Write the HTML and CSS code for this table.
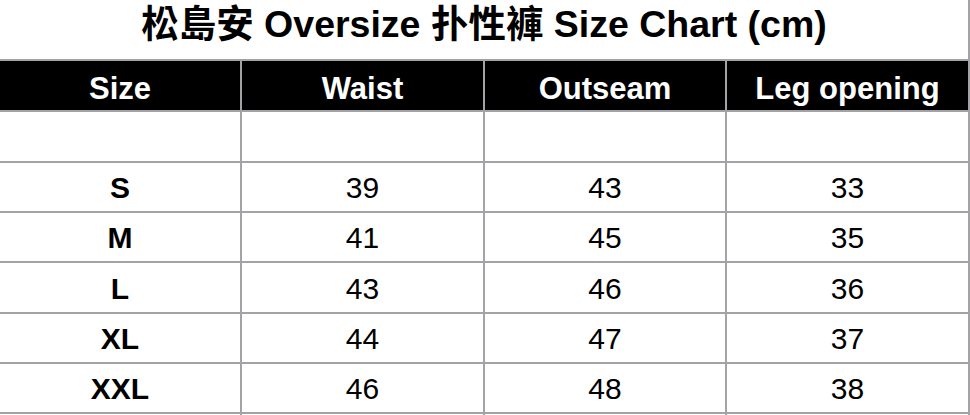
FILE: index.html
```html
<!DOCTYPE html>
<html lang="zh-Hant">
<head>
<meta charset="utf-8">
<title>Size Chart</title>
<link rel="stylesheet" href="styles.css">
</head>
<body>
<div class="chart">
  <div class="cell title">松島安 Oversize 扑性褲 Size Chart (cm)</div>

  <div class="cell head">Size</div>
  <div class="cell head">Waist</div>
  <div class="cell head">Outseam</div>
  <div class="cell head">Leg opening</div>

  <div class="cell blank"></div>
  <div class="cell blank"></div>
  <div class="cell blank"></div>
  <div class="cell blank"></div>

  <div class="cell label">S</div>
  <div class="cell num">39</div>
  <div class="cell num">43</div>
  <div class="cell num">33</div>

  <div class="cell label">M</div>
  <div class="cell num">41</div>
  <div class="cell num">45</div>
  <div class="cell num">35</div>

  <div class="cell label">L</div>
  <div class="cell num">43</div>
  <div class="cell num">46</div>
  <div class="cell num">36</div>

  <div class="cell label">XL</div>
  <div class="cell num">44</div>
  <div class="cell num">47</div>
  <div class="cell num">37</div>

  <div class="cell label">XXL</div>
  <div class="cell num">46</div>
  <div class="cell num">48</div>
  <div class="cell num">38</div>

  <div class="cell blank"></div>
  <div class="cell blank"></div>
  <div class="cell blank"></div>
  <div class="cell blank"></div>
</div>
</body>
</html>
```

FILE: styles.css
```css
html, body {
  margin: 0;
  padding: 0;
  background: #ffffff;
  overflow: hidden;
}

body {
  width: 970px;
  height: 415px;
  font-family: "Liberation Sans", Arial, "Noto Sans CJK TC", sans-serif;
  color: #000000;
}

.chart {
  display: grid;
  grid-template-columns: 240px 241px 240px 241px;
  grid-template-rows: 59px 49px 49px 48px 48px 49px 48px 48px 1px;
  gap: 2px;
  padding-right: 2px;
  background: #a3a3a7;
  width: 968px;
}

.cell {
  background: #ffffff;
  display: flex;
  align-items: center;
  justify-content: center;
  box-sizing: border-box;
  white-space: nowrap;
  overflow: hidden;
}

.title {
  grid-column: 1 / -1;
  font-size: 37.5px;
  font-weight: bold;
  line-height: 40px;
  padding-bottom: 12px;
  font-family: "Liberation Sans", Arial, "Noto Sans CJK TC", sans-serif;
}

.head {
  background: #000000;
  color: #ffffff;
  font-size: 31px;
  font-weight: bold;
  line-height: 36px;
  padding-top: 7px;
}

.label {
  font-size: 30px;
  font-weight: bold;
  line-height: 34px;
  padding-top: 2px;
}

.num {
  font-size: 30px;
  line-height: 34px;
  padding-top: 2px;
}
```
